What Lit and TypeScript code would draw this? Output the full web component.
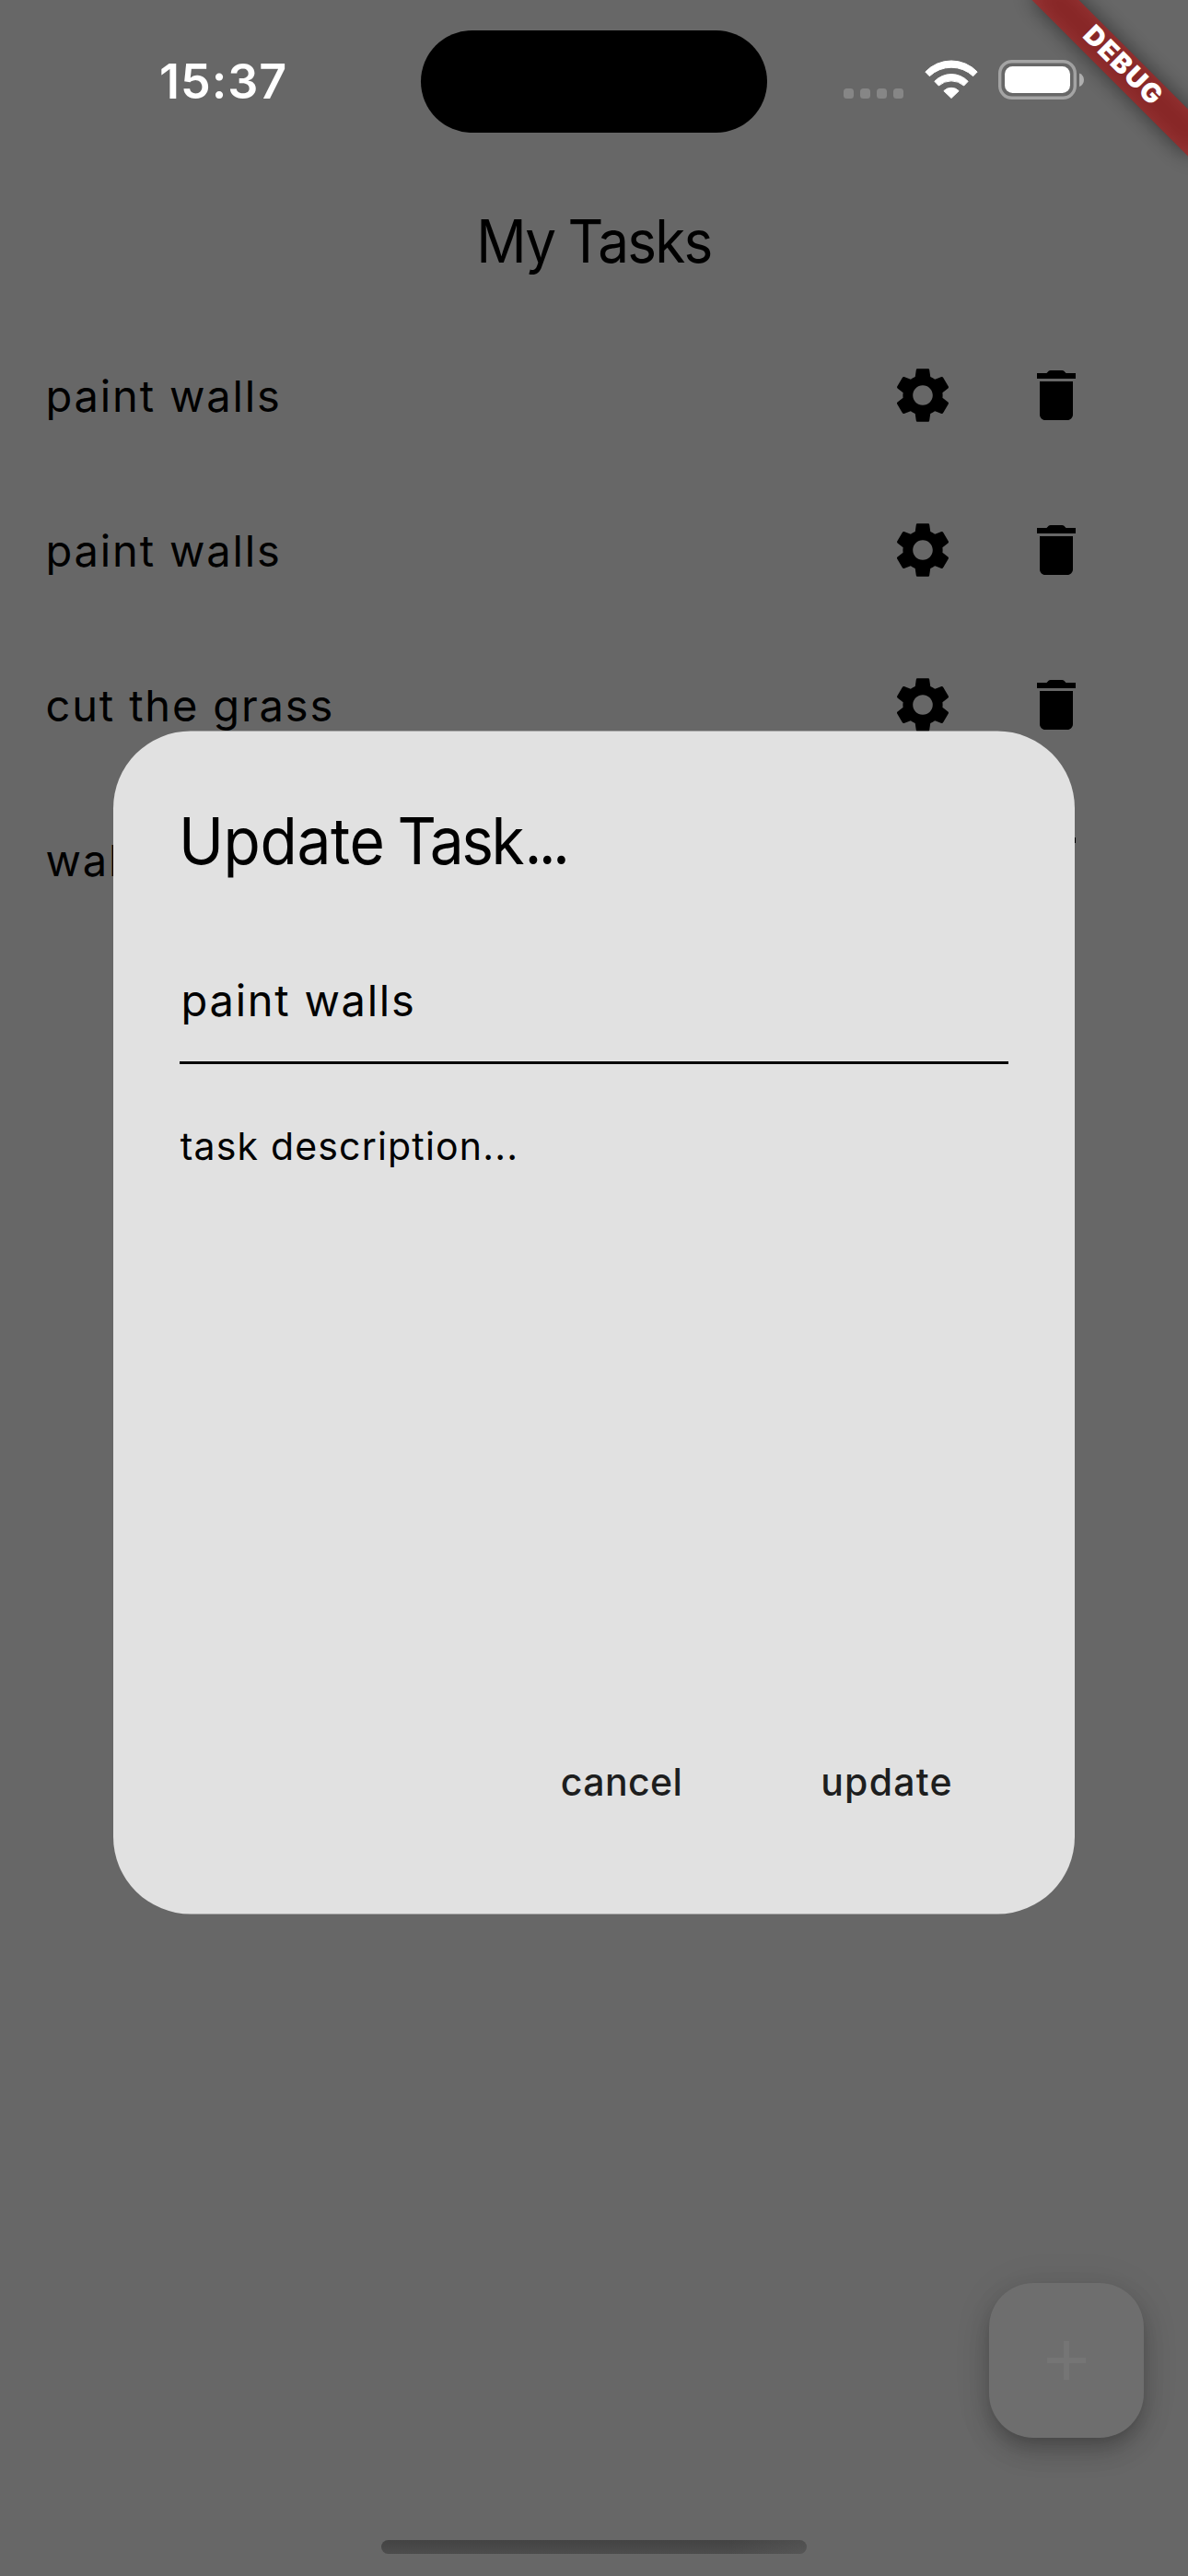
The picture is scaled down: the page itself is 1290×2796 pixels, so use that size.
import { LitElement, html, css, svg } from "lit";
import { customElement, property } from "lit/decorators.js";

const gearPath = svg`<path d="M19.14 12.94c.04-.3.06-.61.06-.94 0-.32-.02-.64-.07-.94l2.03-1.58c.18-.14.23-.41.12-.61l-1.92-3.32c-.12-.22-.37-.29-.59-.22l-2.39.96c-.5-.38-1.03-.7-1.62-.94l-.36-2.54c-.04-.24-.24-.41-.48-.41h-3.84c-.24 0-.43.17-.47.41l-.36 2.54c-.59.24-1.13.57-1.62.94l-2.39-.96c-.22-.08-.47 0-.59.22L2.74 8.87c-.12.21-.08.47.12.61l2.03 1.58c-.05.3-.09.63-.09.94s.02.64.07.94l-2.03 1.58c-.18.14-.23.41-.12.61l1.92 3.32c.12.22.37.29.59.22l2.39-.96c.5.38 1.03.7 1.62.94l.36 2.54c.05.24.24.41.48.41h3.84c.24 0 .44-.17.47-.41l.36-2.54c.59-.24 1.13-.56 1.62-.94l2.39.96c.22.08.47 0 .59-.22l1.92-3.32c.12-.22.07-.47-.12-.61l-2.01-1.58zM12 15.6c-1.98 0-3.6-1.62-3.6-3.6s1.62-3.6 3.6-3.6 3.6 1.62 3.6 3.6-1.62 3.6-3.6 3.6z"/>`;
const trashPath = svg`<path d="M6 19c0 1.1.9 2 2 2h8c1.1 0 2-.9 2-2V7H6v12zM19 4h-3.5l-.71-.71c-.18-.18-.44-.29-.7-.29H9.91c-.26 0-.52.11-.7.29L8.5 4H5v2h14V4z"/>`;

@customElement("task-row")
export class TaskRow extends LitElement {
  @property() name = "";

  static styles = css`
    :host {
      display: flex;
      align-items: center;
      height: 168px;
      padding: 0 71px 0 49.5px;
    }
    .name {
      flex: 1;
      padding-top: 2px;
      font-size: 47px;
      line-height: 72px;
      letter-spacing: 1.85px;
      white-space: nowrap;
    }
    .action {
      display: flex;
      align-items: center;
      justify-content: center;
      width: 144px;
      height: 144px;
    }
    .action + .action {
      margin-left: 1px;
    }
    .icon {
      width: 72px;
      height: 72px;
      fill: #000;
    }
  `;

  render() {
    return html`
      <span class="name">${this.name}</span>
      <span class="action"><svg class="icon" viewBox="0 0 24 24">${gearPath}</svg></span>
      <span class="action"><svg class="icon" viewBox="0 0 24 24">${trashPath}</svg></span>
    `;
  }
}

@customElement("status-bar")
export class StatusBar extends LitElement {
  static styles = css`
    :host {
      display: grid;
      grid-template-columns: 457px 376px 457px;
      height: 177px;
      box-sizing: border-box;
      padding-top: 33px;
      color: #fff;
    }
    .time {
      padding: 28px 0 0 173px;
      font-size: 52px;
      font-weight: 600;
      line-height: 56px;
      letter-spacing: 1px;
    }
    .island {
      height: 111px;
      border-radius: 56px;
      background: #000;
    }
    .indicators {
      display: flex;
      align-items: flex-start;
      padding: 32px 0 0 83px;
    }
    .dots {
      display: flex;
      gap: 7px;
      padding-top: 31px;
    }
    .dot {
      width: 11px;
      height: 11px;
      border-radius: 3.5px;
      background: #868686;
    }
    .wifi {
      width: 58px;
      height: 42px;
      margin-left: 22.5px;
      fill: #fff;
      stroke: #fff;
      stroke-width: 3;
      stroke-linejoin: round;
    }
    .battery {
      width: 94px;
      height: 43px;
      margin-left: 22.5px;
    }
  `;

  render() {
    return html`
      <div class="time">15:37</div>
      <div class="island"></div>
      <div class="indicators">
        <div class="dots">
          ${[0, 1, 2, 3].map(() => html`<span class="dot"></span>`)}
        </div>
        <svg class="wifi" viewBox="0 0 174 126">
          <path d="M2.5 39A117 117 0 0 1 171.5 39L158 53A103 103 0 0 0 16 53Z" />
          <path d="M32.5 70A75 75 0 0 1 141.5 70L128 84A62 62 0 0 0 46 84Z" />
          <path d="M62.5 101A35 35 0 0 1 111.5 101L87 124.5Z" />
        </svg>
        <svg class="battery" viewBox="0 0 94 43">
          <rect x="1.7" y="1.7" width="81.6" height="39.6" rx="13" fill="none" stroke="#a4a4a4" stroke-width="3.4" />
          <rect x="7" y="7" width="71" height="29" rx="8.5" fill="#fff" />
          <path d="M88 14.5C91 15.6 93 18.3 93 21.7S91 27.8 88 29Z" fill="#b0b0b0" />
        </svg>
      </div>
    `;
  }
}

@customElement("debug-banner")
export class DebugBanner extends LitElement {
  static styles = css`
    :host {
      position: absolute;
      top: 54px;
      left: 1098px;
      width: 240px;
      height: 36px;
      transform: rotate(45deg);
    }
    .shade {
      position: absolute;
      inset: 0;
      background: rgba(0, 0, 0, 0.5);
      filter: blur(11.9px);
    }
    .label {
      position: relative;
      height: 36px;
      background: rgba(183, 28, 28, 0.627);
      color: #fff;
      font-size: 29px;
      font-weight: 900;
      line-height: 32px;
      letter-spacing: 1.6px;
      text-indent: 1.6px;
      text-align: center;
    }
  `;

  render() {
    return html`
      <div class="shade"></div>
      <div class="label">DEBUG</div>
    `;
  }
}

@customElement("task-dialog")
export class TaskDialog extends LitElement {
  static styles = css`
    :host {
      position: relative;
      display: flex;
      flex-direction: column;
      box-sizing: border-box;
      width: 1044px;
      height: 1284px;
      padding: 72px;
    }
    .surface {
      position: absolute;
      inset: 0;
      border-radius: 84px;
      background: #e1e1e1;
      transform: translateY(0.5px);
    }
    .title {
      position: relative;
      margin-left: -1px;
      font-size: 70px;
      line-height: 96px;
      letter-spacing: -0.4px;
      white-space: nowrap;
      transform: scaleX(0.94);
      transform-origin: left;
    }
    .noun {
      letter-spacing: -2.66px;
      word-spacing: -2px;
    }
    .dots {
      margin-left: 2.5px;
      letter-spacing: -3.9px;
    }
    .field {
      position: relative;
      margin-top: 48px;
      padding: 41px 0 30px;
      border-bottom: 3px solid #000;
      font-size: 47px;
      line-height: 72px;
      letter-spacing: 1.75px;
      text-indent: 1.5px;
    }
    .description {
      position: relative;
      flex: 1;
      padding-top: 59px;
      font-size: 41px;
      line-height: 60px;
      letter-spacing: 1.18px;
      text-indent: 0.7px;
    }
    .actions {
      position: relative;
      display: flex;
      justify-content: flex-end;
      gap: 24px;
      height: 144px;
    }
    .button {
      width: 264px;
      color: #1d1e1e;
      font-size: 41px;
      font-weight: 500;
      line-height: 146px;
      letter-spacing: 1.2px;
      text-align: center;
    }
    .quiet {
      letter-spacing: 0.4px;
    }
  `;

  render() {
    return html`
      <div class="surface"></div>
      <div class="title">Update<span class="noun"> Task</span><span class="dots">...</span></div>
      <div class="field">paint walls</div>
      <div class="description">task description...</div>
      <div class="actions">
        <div class="button quiet">cancel</div>
        <div class="button">update</div>
      </div>
    `;
  }
}

@customElement("app-root")
export class AppRoot extends LitElement {
  static styles = css`
    :host {
      display: block;
      position: relative;
      width: 1290px;
      height: 2796px;
      overflow: hidden;
      background: #676767;
      color: #000;
      font-family: Inter, "Liberation Sans", sans-serif;
    }
    .title {
      height: 168px;
      font-size: 64px;
      line-height: 170px;
      letter-spacing: -1.85px;
      word-spacing: -1px;
      text-align: center;
      transform: scaleX(0.94);
    }
    .fab {
      position: absolute;
      right: 48px;
      bottom: 150px;
      display: flex;
      align-items: center;
      justify-content: center;
      width: 168px;
      height: 168px;
      border-radius: 48px;
      background: #6e6e6e;
      box-shadow:
        0 9px 15px -3px rgba(0, 0, 0, 0.14),
        0 16px 30px 0 rgba(0, 0, 0, 0.16),
        0 3px 44px 0 rgba(0, 0, 0, 0.08);
    }
    .plus {
      width: 72px;
      height: 72px;
      fill: #757575;
    }
    .home {
      position: absolute;
      left: 414px;
      bottom: 24px;
      width: 462px;
      height: 15px;
      border-radius: 7.5px;
      background:
        linear-gradient(90deg, transparent 82%, rgba(103, 103, 103, 0.35)),
        linear-gradient(#434343, #4d4d4d);
    }
    .modal {
      position: absolute;
      inset: 0;
      display: flex;
      align-items: center;
      justify-content: center;
      padding: 177px 0 103px;
    }
  `;

  private tasks = ["paint walls", "paint walls", "cut the grass", "wal"];

  render() {
    return html`
      <status-bar></status-bar>
      <div class="title">My Tasks</div>
      <div>${this.tasks.map((t) => html`<task-row .name=${t}></task-row>`)}</div>
      <div class="fab">
        <svg class="plus" viewBox="0 0 24 24"><path d="M19 13h-6v6h-2v-6H5v-2h6V5h2v6h6v2z" /></svg>
      </div>
      <div class="home"></div>
      <div class="modal"><task-dialog></task-dialog></div>
      <debug-banner></debug-banner>
    `;
  }
}
